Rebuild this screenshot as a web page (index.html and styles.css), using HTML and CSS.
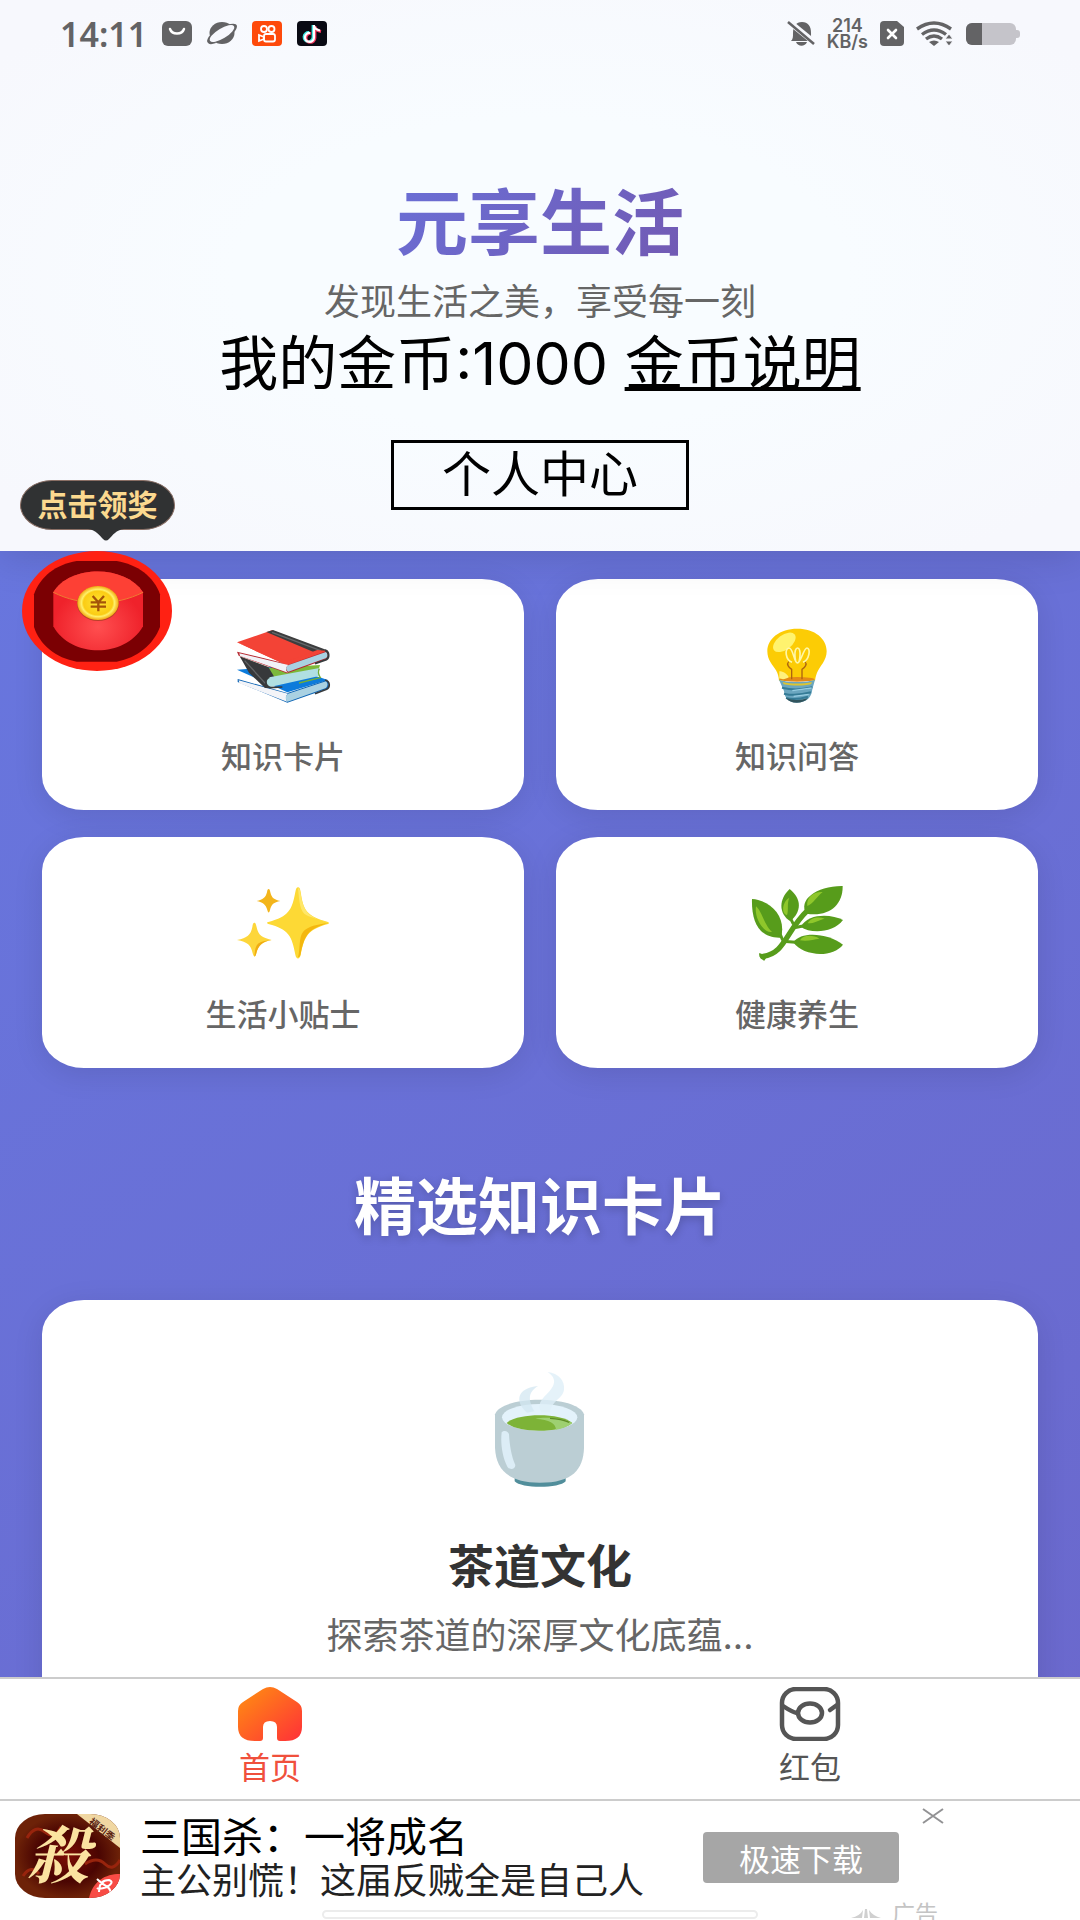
FILE: index.html
```html
<!DOCTYPE html>
<html lang="zh-CN">
<head>
  <meta charset="UTF-8" />
  <meta name="viewport" content="width=device-width, initial-scale=1.0" />
  <title>元享生活</title>
  <link rel="stylesheet" href="styles.css">
</head>
<body>

  <header class="header">
    <div class="status-bar">
      <div class="status-left">
        <span class="time">14:11</span>
        <svg width="30" height="26" viewBox="0 0 30 26">
          <rect width="30" height="25" rx="6" fill="#636365"/>
          <path d="M8 8c2 6 12 6 14 0" fill="none" stroke="#fff" stroke-width="2.4" stroke-linecap="round"/>
        </svg>
        <svg width="30" height="26" viewBox="0 0 30 26">
          <ellipse cx="15" cy="12" rx="12.5" ry="11" fill="#636365"/>
          <path d="M0 20q1-5 5-7l4 9q-8 3-9-2zM30 5q0 4-5 8L20 4q9-3 10 1z" fill="#636365"/>
          <ellipse cx="15" cy="12.500" rx="14" ry="5" transform="rotate(-31 15 12.500)" fill="#f7f8fd"/>
        </svg>
        <svg width="30" height="26" viewBox="0 0 30 26">
          <rect width="30" height="25" rx="4" fill="#fe4a0b"/>
          <g fill="none" stroke="#fff" stroke-width="1.800">
            <circle cx="12" cy="8" r="3"/>
            <circle cx="19.500" cy="8" r="3"/>
            <rect x="12" y="13" width="11" height="7.500" rx="2"/>
            <path d="M12 16l-5-2v6l5-2z"/>
          </g>
        </svg>
        <svg width="30" height="26" viewBox="0 0 30 26">
          <rect width="30" height="25" rx="4" fill="#090a13"/>
          <g fill="none" stroke-width="2.800">
            <path d="M16 4v12a4.500 4.500 0 1 1-4-4.500M16 5c1 3 3 4 6 4.500" stroke="#3ee8e4"/>
            <path d="M18 5v12a4.500 4.500 0 1 1-4-4.500M18 6c1 3 3 4 6 4.500" stroke="#f4365e"/>
            <path d="M17 4v12.500a4.500 4.500 0 1 1-4-4.500M17 5c1 3 3 4 6 4.500" stroke="#fff" stroke-width="2.200"/>
          </g>
        </svg>
      </div>
      <div class="status-right">
        <svg width="28" height="26" viewBox="0 0 28 26" fill="#636365">
          <path d="M4 20c2-2 2-4 2-8C6 5 9 1 15 1s9 4 9 11c0 4 0 6 2 8zM9 21h11c-2 5-9 5-11 0z"/>
          <path d="M1 0l27 22" stroke="#f7f8fd" stroke-width="6"/>
          <path d="M1 1l26 22" stroke="#636365" stroke-width="2.500"/>
        </svg>
        <span class="speed"><span>214</span><span>KB/s</span></span>
        <svg width="24" height="26" viewBox="0 0 24 26">
          <path d="M4 0h13l7 6v15a4 4 0 0 1-4 4H4a4 4 0 0 1-4-4V4a4 4 0 0 1 4-4z" fill="#636365"/>
          <path d="M8 9l8 8M16 9l-8 8" stroke="#fff" stroke-width="2.600" stroke-linecap="round"/>
        </svg>
        <svg width="38" height="26" viewBox="0 0 38 26">
          <g fill="none" stroke="#636365" stroke-width="3.400">
            <path d="M1 8q17-12 34 0"/>
            <path d="M6 13.500q12-9 24 0"/>
            <path d="M10 18q8-6 16 0"/>
          </g>
          <path d="M13 21q5-3 10 0l-5 4z" fill="#636365"/>
          <path d="M29 18l4-5 4 5zM29 20l4 5 4-5z" fill="#636365" stroke="#f7f8fd"/>
        </svg>
        <svg width="54" height="22" viewBox="0 0 54 22">
          <rect width="50" height="22" rx="6" fill="#c5c4ca"/>
          <path d="M50 7h1a3 3 0 0 1 3 3v2a3 3 0 0 1-3 3h-1z" fill="#c5c4ca"/>
          <path d="M6 0h10v22H6a6 6 0 0 1-6-6V6a6 6 0 0 1 6-6z" fill="#636365"/>
        </svg>
      </div>
    </div>

    <h1>元享生活</h1>
    <p class="subtitle">发现生活之美，享受每一刻</p>
    <div class="coins">我的金币:1000 <a href="#coins">金币说明</a></div>
    <button class="profile-btn">个人中心</button>
  </header>

  <main class="content">
    <div class="grid">
      <a class="card" href="#cards">
        <svg class="card-icon" viewBox="105 81 288 240">
          <path d="M111 209l151 68 122-37-130-42z" fill="#0c7bdb"/>
          <path d="M113 237l149 42 118-39c8 8 8 18 2 26l-120 42-149-62z" fill="#0d64b4"/>
          <path d="M116 241l148 40c-8 6-8 18-1 25L118 250z" fill="#f3f4f8"/>
          <path d="M264 281l114-37c6 6 6 14 0 20l-115 41c-8-7-8-17 1-24z" fill="#a9d1e2"/>
          <path d="M375 240c16 4 16 22 5 28l-35 13" fill="none" stroke="#363a3d" stroke-width="5"/>
          <path d="M120 170l90 34 150-9-4 14-158 30z" fill="#7cb93b"/>
          <path d="M119 169l86 32 18 30-12 34-16-1-48-46z" fill="#37393b"/>
          <path d="M134 182l62 68" stroke="#626466" stroke-width="4"/>
          <path d="M208 232l150-28c-5 9-4 16 3 23l-151 34c-15-5-15-22-2-29z" fill="#b0dfe2"/>
          <path d="M358 206c-5 9-4 16 3 27l-64 16" fill="none" stroke="#72ad37" stroke-width="4"/>
          <path d="M208 232c-14 6-14 24 3 31l36-2" fill="none" stroke="#383b3c" stroke-width="5"/>
          <path d="M111 127l105-36 164 62-119 43z" fill="#f34336"/>
          <path d="M199 96l20-6 161 60-27 11z" fill="#3c3d3e"/>
          <path d="M216 97l146 55" stroke="#65686a" stroke-width="4"/>
          <path d="M111 155l151 37 119-42c7 9 6 21 0 27l-120 43-145-53z" fill="#b62830"/>
          <path d="M111 127l150 69 119-43-28-3-90 34z" fill="#f34336"/>
          <path d="M118 160l147 35c-9 7-9 16-1 23L120 168z" fill="#f2f3f7"/>
          <path d="M266 195l112-39c7 6 6 13 1 18l-114 41c-9-6-9-14 1-20z" fill="#a9d1e2"/>
          <path d="M375 151c14 4 13 23 4 28l-34 12" fill="none" stroke="#363a3d" stroke-width="6"/>
        </svg>
        <span>知识卡片</span>
      </a>
      <a class="card" href="#quiz">
        <svg class="card-icon" viewBox="117 81 288 240">
          <path d="M262 86c53 0 88 30 88 68 0 28-20 44-29 64-4 10-5 18-6 24H207c-1-12-3-20-9-31-10-16-26-31-26-57 0-38 37-68 90-68z" fill="#fccc05"/>
          <ellipse cx="261" cy="238" rx="53" ry="7" fill="#e48a17"/>
          <ellipse cx="223" cy="127" rx="39" ry="22" transform="rotate(-37 223 127)" fill="#fff36e"/>
          <path d="M208 214c12 0 24 8 28 18-8 6-20 7-28 3z" fill="#fff17d"/>
          <path d="M245 238v-30c-10-7-16-15-9-23M276 238v-30c10-7 16-15 9-23" fill="none" stroke="#ad6510" stroke-width="4"/>
          <path d="M246 187c-20-8-23-42-9-43 13 0 16 47 25 45 8 0 13-45 1-45-13 0-9 45 0 45s18-45 28-45c12 1 7 36-12 43" fill="none" stroke="#fff7a6" stroke-width="5"/>
          <path d="M207 239c20 9 88 9 108 0l-8 29c-2 24-17 40-46 40-27 0-37-15-39-35z" fill="#6ba6bf"/>
          <path d="M218 246c22 6 64 6 88 0l-3 7c-23 5-57 5-82 0z" fill="#ddc530"/>
          <path d="M216 263c30 8 63 6 91-1M222 281c28 7 56 3 81-4M228 294c20 5 45 2 66-4" fill="none" stroke="#357b96" stroke-width="6"/>
          <path d="M247 272l58-8M251 289l45-6" stroke="#96cce1" stroke-width="4"/>
          <path d="M228 294c20 8 46 7 66 0-8 10-19 14-34 14-14 0-24-4-32-14z" fill="#31545d"/>
        </svg>
        <span>知识问答</span>
      </a>
      <a class="card" href="#tips">
        <svg class="card-icon" viewBox="135 75 288 240">
          <path d="M324 82c5 0 6 4 8 14 8 54 16 72 82 90 4 2 3 5 0 6-63 17-71 39-82 92-3 15-13 15-16 0-10-55-19-76-81-92-5-2-5-5 0-6 62-17 71-36 81-90 2-10 4-14 8-14z" fill="#fdd935"/>
          <path d="M324 292c5-1 7-4 8-10 11-53 20-75 82-92-30 2-63 10-75 26-13 16-8 52-15 76z" fill="#f4b70e"/>
          <path d="M324 84c4 40 5 72 26 82 15 8 38 12 64 22-66-18-74-38-83-92-2-8-4-11-7-12z" fill="#ffe768"/>
          <path d="M193 188c4 0 5 5 7 14 5 24 16 31 45 38-30 6-40 16-46 40-3 13-8 12-11 0-5-25-15-34-47-40 31-6 41-15 46-39 1-9 3-13 6-13z" fill="#fdd63a"/>
          <path d="M245 240c-30 6-40 16-46 40-2 8-4 10-6 9 4-37 6-44 52-49z" fill="#f0ad12"/>
          <path d="M236 87c3 0 4 4 5 10 4 17 11 22 30 26-20 4-27 10-31 27-2 10-6 10-8 0-4-16-13-23-32-27 19-4 27-10 31-26 1-7 2-10 5-10z" fill="#f3b51b"/>
        </svg>
        <span>生活小贴士</span>
      </a>
      <a class="card" href="#health">
        <svg class="card-icon" viewBox="117 75 288 240">
          <g fill="#579c1b">
            <path d="M126 117c58 4 104 55 87 116-66 3-89-48-87-116z"/>
            <path d="M239 87c38 31 35 68 2 97-36-23-35-67-2-97z"/>
            <path d="M398 78c1 59-44 94-109 83-26-40 30-84 109-83z"/>
            <path d="M399 180c-29 39-97 42-127 20 24-42 93-38 127-20z"/>
            <path d="M399 254c-32 41-120 35-149-7 23-35 105-28 149 7z"/>
          </g>
          <g fill="none" stroke="#579c1b" stroke-linecap="round">
            <path d="M159 289c66-8 68-75 133-137" stroke-width="16"/>
            <path d="M211 224l6 14M242 176l7 14M275 199l-26 5M256 247l-37-3" stroke-width="9"/>
          </g>
          <path d="M148 279l24 9-9 14c-10-3-18-12-15-23z" fill="#579c1b"/>
          <g fill="#8fc72b">
            <path d="M138 139c18 15 25 57 48 77-24 4-54-40-48-77z"/>
            <path d="M238 113c-8 19-1 37-7 53-18-5-15-41 7-53z"/>
            <path d="M338 96c-18 14-26 33-46 42-4-25 19-44 46-42z"/>
            <path d="M344 176c-17 4-29 14-51 14 8-17 32-21 51-14z"/>
            <path d="M328 236c-18 2-34 9-58 5 9-17 39-17 58-5z"/>
          </g>
        </svg>
        <span>健康养生</span>
      </a>
    </div>

    <h2>精选知识卡片</h2>

    <article class="feature">
      <svg class="feature-icon" viewBox="576 90 288 360">
        <path d="M644 410h153v14c-18 22-135 22-153 0z" fill="#518e9b"/>
        <path d="M585 223c20-58 246-58 267 0v100c-2 65-34 105-133 105-97 0-131-42-134-105z" fill="#bbced4"/>
        <ellipse cx="719" cy="232" rx="113" ry="40" fill="#e3f2fb"/>
        <path d="M620 249c32-31 163-31 197 0-32 30-164 32-197 0z" fill="#7db337"/>
        <path d="M706 236c29-5 80-3 110 13-12 11-29 17-48 20-1-20-19-29-62-33z" fill="#9ed071"/>
        <path d="M750 235q34 2 58 12" fill="none" stroke="#5c8b25" stroke-width="4"/>
        <path d="M605 277c7-8 20-4 22 6 2 36 8 68 19 92 0 16-21 15-25 3-14-28-20-68-16-101z" fill="#dcedf6"/>
        <path d="M714 138c-33 21-28 44-11 76l-22 4c-38-34-30-74 33-80z" fill="#d3e7f1" opacity=".75"/>
        <path d="M743 96c32 3 53 27 49 53-3 26-40 36-42 68h-25c-30-42 55-64 34-105-4-7-9-11-16-16z" fill="#dfeff7" opacity=".8"/>
      </svg>
      <h3>茶道文化</h3>
      <p>探索茶道的深厚文化底蕴...</p>
    </article>
  </main>

  <button class="reward">
    <span class="reward-tip">点击领奖
      <svg class="reward-tail" width="36" height="12" viewBox="0 0 36 12"><path d="M0 0c8 1 12 7 15 10q3 3 6 0c4-4 7-9 15-10z" fill="#303233"/></svg>
    </span>
    <svg class="reward-icon" width="150" height="120" viewBox="66 273 450 360">
      <defs>
        <radialGradient id="packet" cx="50%" cy="70%">
          <stop offset="0" stop-color="#ff4f50"/>
          <stop offset="1" stop-color="#ef222b"/>
        </radialGradient>
        <radialGradient id="coin">
          <stop offset="0" stop-color="#ffe536"/>
          <stop offset=".7" stop-color="#fbcc14"/>
          <stop offset=".8" stop-color="#fff069"/>
          <stop offset="1" stop-color="#f2a711"/>
        </radialGradient>
      </defs>
      <ellipse cx="291" cy="453" rx="225" ry="180" fill="#ff2113"/>
      <path d="M230 303h120c62 10 112 47 130 100v98c-20 53-69 93-130 104H230c-63-11-111-51-128-104v-98c18-53 66-90 128-100z" fill="#7b0003"/>
      <path d="M160 397c48-82 215-84 269 0v102c-55 96-216 96-269 0z" fill="url(#packet)"/>
      <path d="M160 397c48-82 215-84 269 0-83 42-185 42-269 0z" fill="#fd4035"/>
      <path d="M160 397c83 42 186 42 269 0" fill="none" stroke="#ee7c31" stroke-width="3"/>
      <ellipse cx="294" cy="431" rx="63" ry="52" fill="#b9402a"/>
      <ellipse cx="294" cy="429" rx="62" ry="51" fill="url(#coin)"/>
      <path d="M278 408l17 19 17-19M295 427v27M272 427h46M272 440h46" fill="none" stroke="#a45408" stroke-width="7"/>
    </svg>
  </button>

  <nav class="tabs">
    <a class="tab active" href="#home">
      <svg width="64" height="54" viewBox="0 0 64 54">
        <defs>
          <linearGradient id="home" x1="0" y1="0" x2="1" y2="1">
            <stop offset="0.200" stop-color="#ff7e18"/>
            <stop offset="1" stop-color="#ff3038"/>
          </linearGradient>
        </defs>
        <path d="M25 2q7-4 14 0l20 13q5 3 5 9v16q0 14-17 14h-5q-3 0-3-3V40q0-6-7-6t-7 6v11q0 3-3 3h-5Q0 54 0 40V24q0-6 5-9z" fill="url(#home)"/>
      </svg>
      <span>首页</span>
    </a>
    <a class="tab" href="#packet">
      <svg width="64" height="54" viewBox="0 0 64 54" fill="none" stroke="#555" stroke-width="4.500" stroke-linecap="round">
        <rect x="4" y="2" width="56" height="50" rx="14"/>
        <ellipse cx="32" cy="26" rx="12" ry="9.500"/>
        <path d="M5 19q9 6 14 7M59 18l-7 5"/>
      </svg>
      <span>红包</span>
    </a>
  </nav>

  <aside class="ad">
    <svg class="ad-icon" width="105" height="84" viewBox="0 0 105 84">
      <defs>
        <clipPath id="round"><rect width="105" height="84" rx="30" ry="24"/></clipPath>
        <radialGradient id="dark">
          <stop offset="0" stop-color="#7c0d04"/>
          <stop offset=".6" stop-color="#4a0502"/>
          <stop offset="1" stop-color="#6d2208"/>
        </radialGradient>
      </defs>
      <g clip-path="url(#round)">
        <rect width="105" height="84" fill="url(#dark)"/>
        <path d="M12 24q8-14 18-6t16-5M70 50q12-8 20 0t15-4M8 62q8-12 16-2" fill="none" stroke="#98240d" stroke-width="3"/>
        <path d="M62 0h43v34z" fill="#f0d7a2"/>
        <path d="M74 84c4-17 16-24 31-24v24z" fill="#f84c45"/>
        <path d="M82 65q5 5 9 7t5 7M84 78q0-12 10-12 6 2-2 7-8 3-10 1" fill="none" stroke="#fff" stroke-width="2"/>
      </g>
      <text class="ad-mark" x="43" y="64">殺</text>
      <text class="ad-ribbon" x="73" y="9" transform="rotate(39 73 9)">福利季</text>
    </svg>
    <div class="ad-text">
      <strong>三国杀：一将成名</strong>
      <span>主公别慌！这届反贼全是自己人</span>
    </div>
    <button class="ad-btn">极速下载</button>
    <div class="ad-side">
      <button class="ad-close" aria-label="关闭">
        <svg width="22" height="16" viewBox="0 0 22 16"><path d="M1 1l20 14M21 1L1 15" stroke="#929294" stroke-width="2"/></svg>
      </button>
    </div>
    <span class="ad-label">
      <svg width="30" height="10" viewBox="0 0 30 10"><path d="M0 9q9-2 12-8l-1 8zM13 9l1-9h2l1 9zM18 1q4 6 12 8H19z" fill="#d0d0d0"/></svg>
      广告
    </span>
    <div class="home-bar"></div>
  </aside>

</body>
</html>
```
FILE: styles.css
```css
* {
  box-sizing: border-box;
}

body {
  margin: 0;
  height: 100vh;
  display: flex;
  flex-direction: column;
  overflow: hidden;
  position: relative;
  font-family: 'Inter', 'Noto Sans CJK SC', sans-serif;
  background: linear-gradient(145deg, #677ae3, #6b67cb);
  color: #000;
}

h1, h2, h3, p {
  margin: 0;
}

a {
  color: inherit;
  text-decoration: none;
}

button {
  font-family: inherit;
  color: inherit;
  cursor: pointer;
}

svg {
  display: block;
  flex: none;
}

.header {
  flex: none;
  position: relative;
  display: flex;
  flex-direction: column;
  align-items: center;
  padding-bottom: 41px;
  background: radial-gradient(ellipse at center, #f8fcff 40%, #f7f8fd 90%);
  box-shadow: 0 4px 40px rgba(0, 0, 0, 0.15);
}

.status-bar {
  width: 100%;
  height: 68px;
  padding: 0 60px;
  display: flex;
  justify-content: space-between;
  align-items: center;
  color: #636365;
  font-family: 'Noto Sans', sans-serif;
}

.status-left, .status-right {
  display: flex;
  align-items: center;
  gap: 15px;
}

.status-right {
  gap: 12px;
}

.time {
  font-size: 34px;
  font-weight: 600;
  line-height: 40px;
}

.speed {
  display: flex;
  flex-direction: column;
  align-items: center;
  font-family: 'Inter', sans-serif;
  font-size: 18px;
  font-weight: 600;
  line-height: 16px;
}

h1 {
  margin-top: 110px;
  font-size: 72px;
  line-height: 90px;
  background: linear-gradient(135deg, #6a6fd6, #7259b2);
  -webkit-background-clip: text;
  background-clip: text;
  color: transparent;
}

.subtitle {
  margin-top: 10px;
  font-size: 36px;
  line-height: 48px;
  color: #666;
}

.coins {
  margin-top: 2px;
  font-size: 59px;
  line-height: 72px;
}

.coins a {
  text-decoration: underline;
  text-decoration-thickness: 4px;
  text-underline-offset: 2px;
  text-decoration-skip-ink: none;
}

.profile-btn {
  margin-top: 40px;
  width: 298px;
  height: 70px;
  padding: 0;
  border: 3px solid #000;
  background: none;
  font-size: 49px;
  line-height: 60px;
}

.content {
  flex: 1;
  min-height: 0;
  overflow: hidden;
  padding: 28px 42px 0;
}

.grid {
  display: grid;
  grid-template-columns: 1fr 1fr;
  gap: 27px 32px;
}

.card, .feature {
  display: flex;
  flex-direction: column;
  align-items: center;
  background: #fff;
  border-radius: 42px / 34px;
  box-shadow: 0 6px 30px rgba(0, 0, 0, 0.1);
}

.card {
  padding: 48px 0 31px;
  font-size: 31px;
  font-weight: 500;
  line-height: 44px;
  color: #666;
}

.card-icon {
  width: 96px;
  height: 80px;
  margin-bottom: 28px;
}

h2 {
  margin-top: 100px;
  font-size: 62px;
  line-height: 80px;
  text-align: center;
  color: #fff;
  text-shadow: 0 3px 10px rgba(0, 0, 0, 0.2);
}

.feature {
  margin-top: 52px;
  padding: 70px 40px;
}

.feature-icon {
  width: 96px;
  height: 120px;
  margin-bottom: 46px;
}

.feature h3 {
  font-size: 46px;
  line-height: 60px;
  color: #333;
}

.feature p {
  margin-top: 16px;
  font-size: 36px;
  line-height: 48px;
  color: #666;
}

/* floating red packet */
.reward {
  position: absolute;
  left: 20px;
  top: 480px;
  padding: 0;
  border: none;
  background: none;
}

.reward-tip {
  position: relative;
  display: block;
  width: 155px;
  height: 50px;
  border: 1px solid #8a6f65;
  border-radius: 32px / 25px;
  background: #303233;
  color: #fbd98f;
  font-size: 30px;
  font-weight: bold;
  line-height: 48px;
}

.reward-tail {
  position: absolute;
  left: 67px;
  top: 48px;
}

.reward-icon {
  margin: 21px 0 0 2px;
}

.tabs {
  flex: none;
  display: flex;
  height: 122px;
  border-top: 2px solid #ccc;
  background: #fff;
}

.tab {
  flex: 1;
  display: flex;
  flex-direction: column;
  align-items: center;
  gap: 9px;
  padding-top: 8px;
  font-size: 31px;
  line-height: 36px;
  color: #555;
}

.tab.active {
  color: #f0503c;
}

.ad {
  flex: none;
  position: relative;
  display: flex;
  align-items: flex-start;
  height: 121px;
  padding: 13px 0 0 15px;
  overflow: hidden;
  border-top: 2px solid #ccc;
  background: #fff;
}

.ad-mark {
  font-family: 'Noto Serif CJK SC', 'Noto Sans CJK SC', serif;
  font-size: 62px;
  font-weight: bold;
  font-style: italic;
  text-anchor: middle;
  fill: #fbe3a0;
}

.ad-ribbon {
  font-size: 10px;
  font-weight: bold;
  fill: #5b2413;
}

.ad-text {
  flex: 1;
  display: flex;
  flex-direction: column;
  margin-left: 20px;
  white-space: nowrap;
}

.ad-text strong {
  font-size: 41px;
  font-weight: normal;
  line-height: 46px;
}

.ad-text span {
  font-size: 36px;
  line-height: 42px;
  color: #222;
}

.ad-btn {
  width: 196px;
  height: 51px;
  margin-top: 18px;
  padding: 0;
  border: none;
  border-radius: 4px;
  background: #a6a6a6;
  color: #fff;
  font-size: 31px;
}

.ad-side {
  width: 181px;
  padding-left: 23px;
}

.ad-close {
  display: block;
  margin-top: -6px;
  padding: 0;
  border: none;
  background: none;
}

.ad-label {
  position: absolute;
  right: 142px;
  bottom: -12px;
  display: flex;
  align-items: center;
  gap: 11px;
  font-size: 23px;
  line-height: 36px;
  color: #c4c4c4;
}

.home-bar {
  position: absolute;
  left: 50%;
  bottom: 1px;
  width: 436px;
  height: 9px;
  margin-left: -218px;
  border: 2px solid #ececec;
  border-radius: 5px;
  background: #fff;
}
```
